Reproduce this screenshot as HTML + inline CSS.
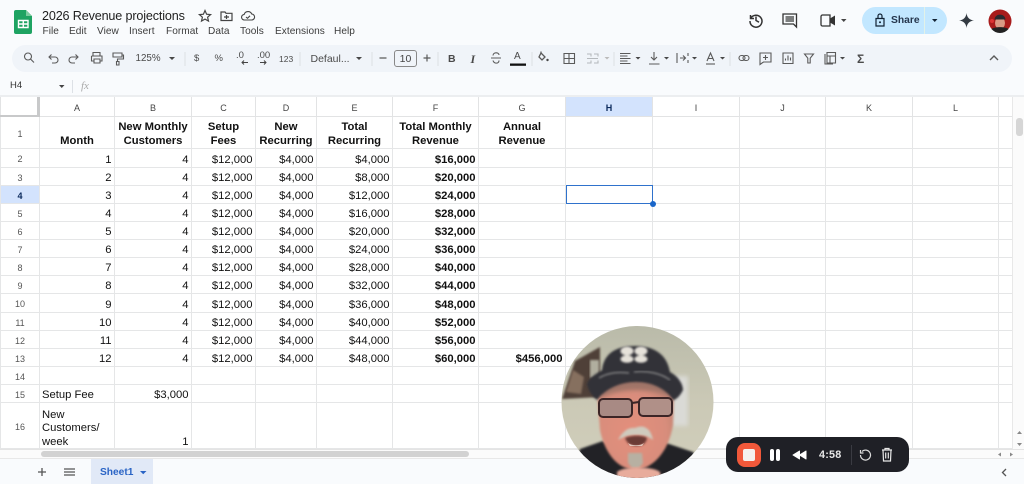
<!DOCTYPE html>
<html><head><meta charset="utf-8"><style>
html,body{margin:0;padding:0;width:1024px;height:484px;overflow:hidden;background:#f9fbfd;font-family:"Liberation Sans",sans-serif;color:#1f1f1f}
.a{position:absolute;white-space:nowrap}
.m{font-size:10.1px;top:25px;color:#3c3c3c;line-height:13px;letter-spacing:.05px}
.t{font-size:9.5px;color:#4a4a4a;line-height:12px;top:53px}
svg{position:absolute;overflow:visible}
table{position:absolute;left:0;top:96px;border-collapse:collapse;table-layout:fixed;width:1012px;background:#fff;font-size:11.25px;color:#111}
td{border:1px solid #e5e6e7;padding:0 2.5px 0 2px;overflow:visible;white-space:nowrap;text-align:right;vertical-align:bottom;line-height:16px;height:17px;box-sizing:border-box;position:relative;top:1px}
tr.h td{height:20px;text-align:center;vertical-align:middle;font-size:9px;color:#444;border-color:#e2e3e4;padding:2px 0 0;top:0}
td.r,tr.b td.r{text-align:center;vertical-align:middle;font-size:9px;color:#555;padding:2px 0 0;top:0;font-weight:normal;line-height:14px}
tr.b td{font-weight:bold;text-align:center;line-height:14px;padding:0 0 1px;vertical-align:bottom}
td.n{font-weight:bold}
td.l{text-align:left;padding-left:2px}
</style></head><body>

<!-- top bar -->
<svg style="left:14px;top:10px" width="19" height="24" viewBox="0 0 19 24"><path d="M2 0H12L18 6V22a2 2 0 0 1-2 2H2a2 2 0 0 1-2-2V2a2 2 0 0 1 2-2z" fill="#1ea362"/><path d="M12 0L18 6H12z" fill="#7ccb9f"/><path d="M4.5 10.5h9.500v7h-9.500z M4.500 14h9.500 M9.250 10.500v7" fill="none" stroke="#fff" stroke-width="1.400"/></svg>
<div class="a" style="left:42px;top:8px;font-size:12.6px;letter-spacing:-.15px;line-height:16px;color:#1f1f1f">2026 Revenue projections</div>
<svg style="left:198px;top:9px" width="14" height="14" viewBox="0 0 14 14"><path d="M7 1.500l1.600 3.700 4 .4-3 2.600.9 3.900L7 10.100l-3.500 2 .9-3.900-3-2.600 4-.4z" fill="none" stroke="#444" stroke-width="1.200"/></svg>
<svg style="left:220px;top:10px" width="13" height="12" viewBox="0 0 13 12"><path d="M1 2h4l1 1.300h6V10.500H1zM4 7h5M6.500 5v4" fill="none" stroke="#444" stroke-width="1.200"/></svg>
<svg style="left:241px;top:10px" width="14" height="11" viewBox="0 0 14 11"><path d="M3.500 10a2.800 2.800 0 0 1-.3-5.600A4 4 0 0 1 10.700 4a3 3 0 0 1-.2 6zM5 7l1.500 1.300L9 5.800" fill="none" stroke="#444" stroke-width="1.100"/></svg>
<div class="a m" style="left:42.500px">File</div><div class="a m" style="left:69px">Edit</div><div class="a m" style="left:97px">View</div><div class="a m" style="left:129px">Insert</div><div class="a m" style="left:166px">Format</div><div class="a m" style="left:208px">Data</div><div class="a m" style="left:240px">Tools</div><div class="a m" style="left:275px">Extensions</div><div class="a m" style="left:334px">Help</div>

<svg style="left:748px;top:12px" width="16" height="16" viewBox="0 0 16 16"><path d="M2.500 3v3.500H6M2.800 6.200A6 6 0 1 1 2 9M8 4.500V8.500l3 1.700" fill="none" stroke="#333" stroke-width="1.500"/></svg>
<svg style="left:782px;top:13px" width="16" height="15" viewBox="0 0 16 15"><path d="M1 1h13.500v13l-3-3H1zM3.500 4h8.500M3.500 6h8.500M3.500 8h8.500" fill="none" stroke="#333" stroke-width="1.300"/></svg>
<svg style="left:820px;top:14px" width="16" height="13" viewBox="0 0 16 13"><path d="M1 2.500a1.500 1.500 0 0 1 1.500-1.500H10V12H2.500A1.500 1.500 0 0 1 1 10.500z" fill="none" stroke="#333" stroke-width="1.300"/><path d="M10 4.500L15 1.500V11.500L10 8.500z" fill="#333"/></svg>
<svg style="left:841px;top:19px" width="7" height="4"><path d="M0 0h5.500L2.750 3z" fill="#444"/></svg>
<div class="a" style="left:862px;top:7px;width:85px;height:27px;border-radius:14px;background:#c2e7ff"></div>
<div class="a" style="left:924px;top:7px;width:1px;height:27px;background:#e3f2e8"></div>
<svg style="left:875px;top:13px" width="10" height="14" viewBox="0 0 10 14"><path d="M1 5.500h8V13H1zM3 5.500V3a2 2 0 0 1 4 0V5.500" fill="none" stroke="#123" stroke-width="1.200"/><circle cx="5" cy="9.200" r="1" fill="#123"/></svg>
<div class="a" style="left:891px;top:14px;font-size:10.300px;font-weight:bold;line-height:13px;color:#25364d">Share</div>
<svg style="left:932px;top:19px" width="7" height="4"><path d="M0 0h5.500L2.750 3z" fill="#123"/></svg>
<svg style="left:959px;top:13px" width="15" height="15" viewBox="0 0 15 15"><path d="M7.500 0C8 4.500 10.500 7 15 7.500 10.500 8 8 10.500 7.500 15 7 10.500 4.500 8 0 7.500 4.500 7 7 4.500 7.500 0z" fill="#333a42"/></svg>
<svg style="left:988px;top:9px" width="24" height="24" viewBox="0 0 24 24"><circle cx="12" cy="12" r="11.500" fill="#a81c1c"/><ellipse cx="12" cy="14" rx="5" ry="6" fill="#d99a85"/><path d="M6.500 10.500C7 4 17 4 17.500 10.500z" fill="#2a2a30"/><path d="M3.500 20a11 11 0 0 0 17 0C17 17.500 7 17.500 3.500 20z" fill="#222"/><circle cx="4" cy="12" r="2" fill="#d33"/></svg>

<!-- toolbar -->
<div class="a" style="left:12px;top:45px;width:1000px;height:27px;border-radius:14px;background:#f0f4f9"></div>
<svg style="left:0;top:0" width="1024" height="90" fill="none" stroke="#5a5a5a" stroke-width="1.100">
<circle cx="28" cy="56.500" r="3.500"/><path d="M30.500 59l3.500 3.500"/>
<path d="M49 57h6a3 3 0 0 1 0 6h-3M51.500 54.500L49 57l2.500 2.500"/>
<path d="M78 57h-6a3 3 0 0 0 0 6h3M75.500 54.500L78 57l-2.500 2.500"/>
<path d="M93 56v-3.500h7V56M91.500 56h10.500v5H100M91.500 56v5H94M94 59h6v4h-6z"/>
<path d="M113 53h9v4h-9zM122 55h1.500v4h-6v2.500M116.500 61.500h2.500v3.500h-2.500z"/>
<path d="M185 52v14M300 52v14M372 52v14M438 52v14M532 52v14M614 52v14M730 52v14" stroke="#dde1e6"/>
<path d="M379.500 58h7M423.500 58h7M427 54.500v7" stroke-width="1.200"/>
<path d="M491 58h10M493 55.500c0-3.500 6-3.500 6-.5M493 60.500c1 3.500 6 3.500 6 0" />
<path d="M541 53l4 4-3 3-3-3zM541 51.500v2" stroke-width="1.300"/>
<path d="M564 53.500h10.500v10H564zM569 53.500v10M564 58.500h10.500"/>
<path d="M587 54h4v2.500M594 54h4v2.500M587 63h4v-2.500M594 63h4v-2.500M587 58.500h11" stroke="#b5b9bd"/>
<path d="M620 53.500h10.500M620 56h7.500M620 58.500h10.500M620 61h7.500M620 63.500h10.500"/>
<path d="M654 52v7.500M651 57l3 3 3-3M649 64h10.500"/>
<path d="M677 53v10M680 58h5.500M683 55.500l2.500 2.500-2.500 2.500M688 53v3M688 60v3"/>
<path d="M706 64h9"/><path d="M707 61l3.500-8 3.500 8M708 58.500h5"/>
<rect x="739" y="55.500" width="6" height="5" rx="2.500"/><rect x="743" y="55.500" width="6" height="5" rx="2.500"/>
<path d="M760 53h11v9h-7.500l-3.500 2.500zM765.500 55v5M763 57.500h5"/>
<path d="M783 53h10v10.500h-10zM785.500 60.500v-2M788 60.500v-5M790.500 60.500v-3"/>
<path d="M804.500 54h9l-3.300 4.200V63h-2.400V58.200z"/>
<path d="M825 54v10h8M827 52.500h8.500v10.500H827zM827 56h8.500M830 56v7"/>
<path d="M990 60l4-4 4 4" stroke-width="1.400"/>
</svg>
<svg style="left:0;top:0" width="1024" height="90" fill="#474747">
<path d="M169 57h6l-3 3zM356 57h6l-3 3zM635.500 57h5l-2.500 2.500zM664 57h5l-2.500 2.500zM692 57h5l-2.500 2.500zM720 57h5l-2.500 2.500zM840 57h5l-2.500 2.500z"/>
<path d="M604.500 57h5l-2.500 2.500z" fill="#bbb"/>
<rect x="510" y="63.500" width="16" height="2.300" fill="#111"/>
<circle cx="547.500" cy="60" r="1.200"/>
</svg>
<div class="a t" style="left:135.500px;font-size:9.800px">125%</div>
<div class="a t" style="left:194px">$</div>
<div class="a t" style="left:214.500px">%</div>
<div class="a t" style="left:236px;top:50px">.0</div>
<svg style="left:240px;top:60px" width="8" height="5"><path d="M8 2.500H2M4 .5L2 2.500l2 2" fill="none" stroke="#444" stroke-width="1"/></svg>
<div class="a t" style="left:257px;top:50px">.00</div>
<svg style="left:260px;top:60px" width="8" height="5"><path d="M0 2.500H6M4 .5l2 2-2 2" fill="none" stroke="#444" stroke-width="1"/></svg>
<div class="a t" style="left:279px;font-size:8.500px">123</div>
<div class="a t" style="left:310.500px;font-size:10.500px">Defaul...</div>
<div class="a" style="left:394px;top:50px;width:21px;height:15px;border:1px solid #888;border-radius:3px;font-size:10.500px;text-align:center;line-height:16px;color:#444">10</div>
<div class="a t" style="left:448px;font-size:10.500px;font-weight:bold">B</div>
<div class="a t" style="left:470.500px;font-family:'Liberation Serif',serif;font-size:12px;font-style:italic;font-weight:bold">I</div>
<div class="a t" style="left:514px;top:51px;font-size:10px">A</div>
<div class="a t" style="left:857px;font-size:12px;font-weight:bold;top:53px">Σ</div>

<!-- formula bar -->
<div class="a" style="left:10px;top:80px;font-size:9.500px;line-height:12px;color:#333">H4</div>
<svg style="left:59px;top:85px" width="7" height="4"><path d="M0 0h5.500L2.750 3z" fill="#444"/></svg>
<div class="a" style="left:72px;top:80px;width:1px;height:13px;background:#dde1e6"></div>
<div class="a" style="left:81px;top:80px;font-family:'Liberation Serif',serif;font-style:italic;font-size:11px;line-height:13px;color:#aaa">fx</div>

<!-- grid -->
<table>
<colgroup><col style="width:39px"><col style="width:75px"><col style="width:77px"><col style="width:64px"><col style="width:61px"><col style="width:76px"><col style="width:86px"><col style="width:87px"><col style="width:87px"><col style="width:87px"><col style="width:86px"><col style="width:87px"><col style="width:86px"><col style="width:14px"></colgroup>
<tr class="h"><td></td><td>A</td><td>B</td><td>C</td><td>D</td><td>E</td><td>F</td><td>G</td><td style="background:#d3e3fd;font-weight:bold;color:#0b2a5c">H</td><td>I</td><td>J</td><td>K</td><td>L</td><td></td></tr>
<tr class="b" style="height:32px"><td class="r" style="height:32px">1</td><td>Month</td><td>New Monthly<br>Customers</td><td>Setup<br>Fees</td><td>New<br>Recurring</td><td>Total<br>Recurring</td><td>Total Monthly<br>Revenue</td><td>Annual<br>Revenue</td><td></td><td></td><td></td><td></td><td></td><td></td></tr>
<tr style="height:19px"><td class="r" style="height:19px">2</td><td>1</td><td>4</td><td>$12,000</td><td>$4,000</td><td>$4,000</td><td class="n">$16,000</td><td></td><td></td><td></td><td></td><td></td><td></td><td></td></tr>
<tr style="height:18px"><td class="r" style="height:18px">3</td><td>2</td><td>4</td><td>$12,000</td><td>$4,000</td><td>$8,000</td><td class="n">$20,000</td><td></td><td></td><td></td><td></td><td></td><td></td><td></td></tr>
<tr style="height:18px"><td class="r" style="height:18px;background:#d3e3fd;font-weight:bold;color:#0b2a5c">4</td><td>3</td><td>4</td><td>$12,000</td><td>$4,000</td><td>$12,000</td><td class="n">$24,000</td><td></td><td></td><td></td><td></td><td></td><td></td><td></td></tr>
<tr style="height:18px"><td class="r" style="height:18px">5</td><td>4</td><td>4</td><td>$12,000</td><td>$4,000</td><td>$16,000</td><td class="n">$28,000</td><td></td><td></td><td></td><td></td><td></td><td></td><td></td></tr>
<tr style="height:18px"><td class="r" style="height:18px">6</td><td>5</td><td>4</td><td>$12,000</td><td>$4,000</td><td>$20,000</td><td class="n">$32,000</td><td></td><td></td><td></td><td></td><td></td><td></td><td></td></tr>
<tr style="height:18px"><td class="r" style="height:18px">7</td><td>6</td><td>4</td><td>$12,000</td><td>$4,000</td><td>$24,000</td><td class="n">$36,000</td><td></td><td></td><td></td><td></td><td></td><td></td><td></td></tr>
<tr style="height:18px"><td class="r" style="height:18px">8</td><td>7</td><td>4</td><td>$12,000</td><td>$4,000</td><td>$28,000</td><td class="n">$40,000</td><td></td><td></td><td></td><td></td><td></td><td></td><td></td></tr>
<tr style="height:18px"><td class="r" style="height:18px">9</td><td>8</td><td>4</td><td>$12,000</td><td>$4,000</td><td>$32,000</td><td class="n">$44,000</td><td></td><td></td><td></td><td></td><td></td><td></td><td></td></tr>
<tr style="height:19px"><td class="r" style="height:19px">10</td><td>9</td><td>4</td><td>$12,000</td><td>$4,000</td><td>$36,000</td><td class="n">$48,000</td><td></td><td></td><td></td><td></td><td></td><td></td><td></td></tr>
<tr style="height:18px"><td class="r" style="height:18px">11</td><td>10</td><td>4</td><td>$12,000</td><td>$4,000</td><td>$40,000</td><td class="n">$52,000</td><td></td><td></td><td></td><td></td><td></td><td></td><td></td></tr>
<tr style="height:18px"><td class="r" style="height:18px">12</td><td>11</td><td>4</td><td>$12,000</td><td>$4,000</td><td>$44,000</td><td class="n">$56,000</td><td></td><td></td><td></td><td></td><td></td><td></td><td></td></tr>
<tr style="height:18px"><td class="r" style="height:18px">13</td><td>12</td><td>4</td><td>$12,000</td><td>$4,000</td><td>$48,000</td><td class="n">$60,000</td><td class="n">$456,000</td><td></td><td></td><td></td><td></td><td></td><td></td></tr>
<tr style="height:18px"><td class="r" style="height:18px">14</td><td></td><td></td><td></td><td></td><td></td><td></td><td></td><td></td><td></td><td></td><td></td><td></td><td></td></tr>
<tr style="height:18px"><td class="r" style="height:18px">15</td><td class="l">Setup Fee</td><td>$3,000</td><td></td><td></td><td></td><td></td><td></td><td></td><td></td><td></td><td></td><td></td><td></td></tr>
<tr style="height:46px"><td class="r" style="height:46px">16</td><td class="l" style="line-height:13.500px;white-space:normal">New Customers/ week</td><td style="line-height:14px">1</td><td></td><td></td><td></td><td></td><td></td><td></td><td></td><td></td><td></td><td></td><td></td></tr>
</table>
<div class="a" style="left:0;top:95px;width:1024px;height:2px;background:#eceef0"></div>
<div class="a" style="left:37px;top:97px;width:2.500px;height:20px;background:#c8c9ca"></div>
<div class="a" style="left:0;top:114.500px;width:39.500px;height:2.500px;background:#c8c9ca"></div>
<div class="a" style="left:565.500px;top:184.500px;width:87.500px;height:19px;border:1.500px solid #2f72cc;box-sizing:border-box"></div>
<div class="a" style="left:650px;top:201px;width:6px;height:6px;border-radius:3px;background:#1a66c9"></div>

<!-- scrollbars -->
<div class="a" style="left:1012px;top:97px;width:12px;height:362px;background:#fbfbfb;border-left:1px solid #e8e8e8;box-sizing:border-box"></div>
<div class="a" style="left:1016px;top:118px;width:7px;height:18px;border-radius:3px;background:#d6d6d6"></div>
<div class="a" style="left:0;top:449px;width:1024px;height:10px;background:#fbfbfb;border-top:1px solid #e4e4e4;border-bottom:1px solid #e8e8e8;box-sizing:border-box"></div>
<div class="a" style="left:41px;top:451px;width:428px;height:6px;border-radius:3px;background:#d2d2d2"></div>
<svg style="left:995px;top:450px" width="29" height="9" fill="#888"><path d="M6 2.500v4L3 4.500zM15 2.500v4l3-2z"/></svg>
<svg style="left:1015px;top:428px" width="9" height="22" fill="#888"><path d="M2 6h5L4.500 3zM2 15h5l-2.500 3z"/></svg>

<!-- sheet tabs -->
<div class="a" style="left:0;top:459px;width:1024px;height:25px;background:#f9fbfd"></div>
<svg style="left:37px;top:467px" width="10" height="10"><path d="M5 1v8M1 5h8" stroke="#555" stroke-width="1.300"/></svg>
<svg style="left:64px;top:467px" width="11" height="10"><path d="M0 2h11M0 5h11M0 8h11" stroke="#555" stroke-width="1.200"/></svg>
<div class="a" style="left:91px;top:459px;width:62px;height:25px;background:#e1e9f7"></div>
<div class="a" style="left:100px;top:466px;font-size:10.200px;font-weight:bold;color:#2a64c5;line-height:13px">Sheet1</div>
<svg style="left:140px;top:471px" width="7" height="4"><path d="M0 0h6.500L3.200 3.300z" fill="#2a64c5"/></svg>
<svg style="left:1001px;top:468px" width="6" height="9"><path d="M5 1L1.500 4.500 5 8" fill="none" stroke="#555" stroke-width="1.300"/></svg>

<!-- webcam bubble -->
<svg style="left:0;top:0" width="1024" height="484">
<defs>
<clipPath id="c"><circle cx="637.500" cy="402" r="76"/></clipPath>
<linearGradient id="bg" x1="0" y1="0" x2="0" y2="1"><stop offset="0" stop-color="#b9baa9"/><stop offset=".5" stop-color="#cbc9b6"/><stop offset="1" stop-color="#d2cfbc"/></linearGradient>
<radialGradient id="sk" cx=".45" cy=".6" r=".65"><stop offset="0" stop-color="#e48f7c"/><stop offset=".7" stop-color="#d88d7b"/><stop offset="1" stop-color="#b98072"/></radialGradient>
<filter id="f"><feGaussianBlur stdDeviation="1"/></filter>
<filter id="g"><feGaussianBlur stdDeviation="2"/></filter>
</defs>
<g clip-path="url(#c)">
<rect x="560" y="324" width="156" height="156" fill="url(#bg)"/>
<path d="M562 399L575 361 600 347V397z" fill="#4f4038" filter="url(#f)"/>
<path d="M566 392l7-22 11 7-3 17z" fill="#86705f" filter="url(#f)"/>
<rect x="590" y="360" width="9" height="18" fill="#b0ae9f" filter="url(#f)"/>
<rect x="672" y="376" width="16" height="50" fill="#dadad6" filter="url(#g)"/>
<path d="M572 480L580 449 603 441 640 466 660 441 693 452 710 480z" fill="#242327" filter="url(#f)"/>
<path d="M597 392C600 372 672 372 674 392L673 425C668 455 650 470 634 470 615 468 604 450 600 430z" fill="url(#sk)" filter="url(#f)"/>
<path d="M600 388c12-12 58-12 70 0l-1 8c-16-8-50-8-68 1z" fill="#a07468" filter="url(#g)"/>
<path d="M587 384C590 376 598 373 602 370 604 352 618 346 635 346 655 346 667 355 670 372 678 376 683 384 683 390 680 396 676 400 673 400 658 376 615 376 597 400 592 396 588 390 587 384z" fill="#323138" filter="url(#f)"/>
<path d="M599 378c10-6 20-6 30-5M634 372c14-2 28 2 36 8" fill="none" stroke="#8f8f8f" stroke-width="1.300" filter="url(#f)"/>
<g fill="#e6e2da" filter="url(#f)"><ellipse cx="627" cy="351" rx="6.500" ry="4.500"/><ellipse cx="641" cy="351" rx="6.500" ry="4.500"/><ellipse cx="627" cy="359" rx="6.500" ry="3.800"/><ellipse cx="641" cy="359" rx="6.500" ry="3.800"/></g>
<rect x="599" y="399" width="33" height="18" rx="4" fill="#a88a84"/>
<rect x="639" y="398" width="33" height="18" rx="4" fill="#b09088"/>
<rect x="599" y="399" width="33" height="18" rx="4" fill="none" stroke="#3b2526" stroke-width="2"/>
<rect x="639" y="398" width="33" height="18" rx="4" fill="none" stroke="#3b2526" stroke-width="2"/>
<path d="M632 403l7-1" stroke="#3b2526" stroke-width="2"/>
<path d="M618 440c4-8 10-13 17-12 4-2 9-2 11 0 3 1 6 6 7 12-5-4-11-5-17-5-7 0-13 2-18 5z" fill="#cfcabd" filter="url(#f)"/>
<path d="M625 438c6-3 18-3 22 0-1 6-5 8-11 8-6 0-9-3-11-8z" fill="#6b3a36" filter="url(#f)"/>
<path d="M628 443c4 3 12 3 16 0l-2 3h-12z" fill="#ecdcd2" opacity=".8"/>
<path d="M628 453h14l1 10-4 5h-7l-4-5z" fill="#b7b0a2" filter="url(#f)"/>
<path d="M617 472c6-6 36-6 43 0l2 10h-45z" fill="#e8ac9c" filter="url(#f)"/>
</g>
</svg>

<!-- recorder pill -->
<div class="a" style="left:726px;top:437px;width:183px;height:35px;border-radius:12px;background:#1f2026"></div>
<div class="a" style="left:737px;top:443px;width:24px;height:24px;border-radius:8px;background:#f1583a"></div>
<div class="a" style="left:743px;top:449px;width:12px;height:12px;border-radius:2px;background:#f4f1ee"></div>
<div class="a" style="left:770px;top:449px;width:4px;height:12px;border-radius:2px;background:#fff"></div>
<div class="a" style="left:776px;top:449px;width:4px;height:12px;border-radius:2px;background:#fff"></div>
<svg style="left:792px;top:450px" width="15" height="10"><path d="M7.500 1v8L1 5zM14 1v8L7.500 5z" fill="#fff" stroke="#fff" stroke-linejoin="round"/></svg>
<div class="a" style="left:819px;top:449px;font-size:10.800px;font-weight:bold;line-height:13px;color:#e8e8e8;letter-spacing:.2px">4:58</div>
<div class="a" style="left:851px;top:445px;width:1px;height:20px;background:#3a3b42"></div>
<svg style="left:859px;top:449px" width="13" height="12"><path d="M3 2.500A5 5 0 1 1 1.500 6M1.500 1v3h3" fill="none" stroke="#ddd" stroke-width="1.200"/></svg>
<svg style="left:881px;top:447px" width="12" height="15" viewBox="0 0 12 15"><path d="M1 3h10M4 3V1.500h4V3M2 3l.5 11h7L10 3M4.700 5.500v6M7.300 5.500v6" fill="none" stroke="#e8e8e8" stroke-width="1.200"/></svg>
</body></html>
